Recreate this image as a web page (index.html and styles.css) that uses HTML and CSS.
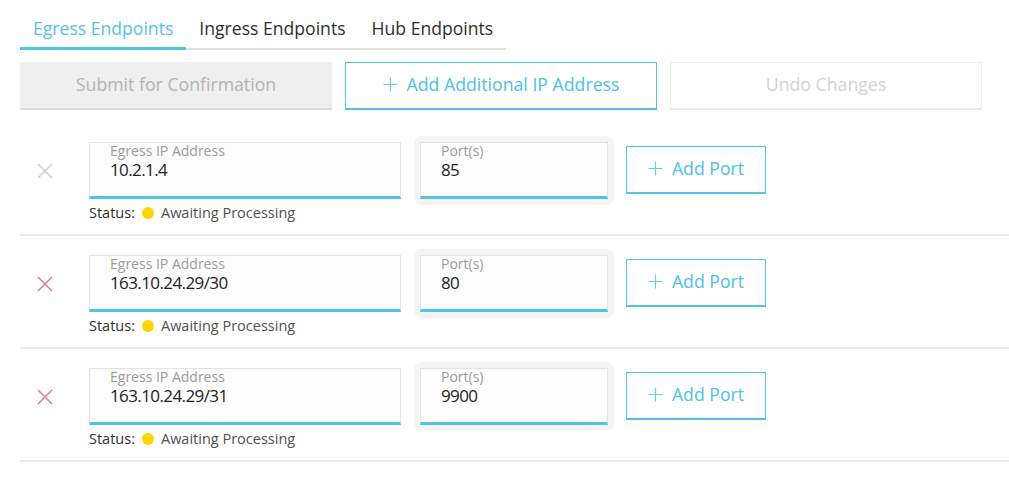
FILE: index.html
```html
<!DOCTYPE html>
<html lang="en">
<head>
<meta charset="utf-8">
<title>Endpoints</title>
<link rel="stylesheet" href="styles.css">
</head>
<body>
<div class="page">
  <nav class="tabs">
    <div class="tab active">Egress Endpoints</div>
    <div class="tab">Ingress Endpoints</div>
    <div class="tab">Hub Endpoints</div>
  </nav>

  <div class="actions">
    <button class="btn btn-disabled">Submit for Confirmation</button>
    <button class="btn btn-primary"><svg class="plus" viewBox="0 0 16 16"><path d="M8 0.5V15.5M0.5 8H15.5"/></svg>Add Additional IP Address</button>
    <button class="btn btn-ghost">Undo Changes</button>
  </div>

  <div class="rows">
    <div class="row">
      <div class="remove"><svg class="x muted" viewBox="0 0 16 16"><path d="M1 1L15 15M15 1L1 15"/></svg></div>
      <div class="ip-col">
        <div class="field ip"><span class="label">Egress IP Address</span><span class="value">10.2.1.4</span></div>
        <div class="status"><span class="status-key">Status:</span><span class="dot"></span><span class="status-val">Awaiting Processing</span></div>
      </div>
      <div class="port-wrap"><div class="field port"><span class="label">Port(s)</span><span class="value">85</span></div></div>
      <button class="btn btn-primary add-port"><svg class="plus" viewBox="0 0 16 16"><path d="M8 0.5V15.5M0.5 8H15.5"/></svg>Add Port</button>
    </div>

    <div class="row">
      <div class="remove"><svg class="x danger" viewBox="0 0 16 16"><path d="M1 1L15 15M15 1L1 15"/></svg></div>
      <div class="ip-col">
        <div class="field ip"><span class="label">Egress IP Address</span><span class="value">163.10.24.29/30</span></div>
        <div class="status"><span class="status-key">Status:</span><span class="dot"></span><span class="status-val">Awaiting Processing</span></div>
      </div>
      <div class="port-wrap"><div class="field port"><span class="label">Port(s)</span><span class="value">80</span></div></div>
      <button class="btn btn-primary add-port"><svg class="plus" viewBox="0 0 16 16"><path d="M8 0.5V15.5M0.5 8H15.5"/></svg>Add Port</button>
    </div>

    <div class="row">
      <div class="remove"><svg class="x danger" viewBox="0 0 16 16"><path d="M1 1L15 15M15 1L1 15"/></svg></div>
      <div class="ip-col">
        <div class="field ip"><span class="label">Egress IP Address</span><span class="value">163.10.24.29/31</span></div>
        <div class="status"><span class="status-key">Status:</span><span class="dot"></span><span class="status-val">Awaiting Processing</span></div>
      </div>
      <div class="port-wrap"><div class="field port"><span class="label">Port(s)</span><span class="value">9900</span></div></div>
      <button class="btn btn-primary add-port"><svg class="plus" viewBox="0 0 16 16"><path d="M8 0.5V15.5M0.5 8H15.5"/></svg>Add Port</button>
    </div>
  </div>
</div>
</body>
</html>
```

FILE: styles.css
```css
* { box-sizing: border-box; }

html, body {
  margin: 0;
  padding: 0;
  background: #ffffff;
}

body {
  font-family: "Open Sans", "Noto Sans", sans-serif;
  color: #2e2e2e;
}

.page {
  padding-left: 20px;
}

/* Tabs */
.tabs {
  display: inline-flex;
  border-bottom: 2px solid #e1e1e1;
}

.tab {
  padding: 16px 13px 7px;
  font-size: 17.6px;
  line-height: 24px;
  color: #2e2e2e;
  border-bottom: 3px solid transparent;
  margin-bottom: -2px;
}

.tab.active {
  color: #56c1e5;
  border-bottom-color: #4fc4e6;
}

/* Buttons */
.actions {
  display: grid;
  grid-template-columns: repeat(3, 312px);
  column-gap: 13px;
  margin-top: 12px;
}

.btn {
  display: flex;
  align-items: center;
  justify-content: center;
  height: 48px;
  padding: 0 0 3px;
  margin: 0;
  font-family: inherit;
  font-size: 17.7px;
  background: #ffffff;
  border: 1px solid transparent;
  border-bottom-width: 2px;
  cursor: pointer;
}

.btn-disabled {
  background: #efefef;
  border-color: #efefef;
  border-bottom-color: #dcdcdc;
  color: #b3b3b3;
}

.btn-primary {
  border-color: #4fc4e6;
  color: #4fbfe3;
}

.btn-ghost {
  border-color: #efefef;
  border-bottom-color: #e8e8e8;
  color: #d2d2d2;
}

.plus {
  width: 15px;
  height: 15px;
  margin-right: 9px;
  fill: none;
  stroke: #6cc9e8;
  stroke-width: 1.3;
}

/* Rows */
.rows {
  margin-top: 13px;
}

.row {
  display: flex;
  align-items: flex-start;
  padding: 13px 0 12px;
  border-bottom: 2px solid #ececec;
}

.remove {
  width: 69px;
  height: 69px;
  display: flex;
  align-items: center;
  padding-left: 17px;
  padding-top: 1px;
}

.x {
  width: 16px;
  height: 16px;
  fill: none;
  stroke-width: 1.5;
}

.x.muted { stroke: #cdcdcd; }
.x.danger { stroke: #e07d8c; }

.ip-col {
  width: 312px;
  padding-top: 6px;
  margin-right: 13px;
}

.field {
  display: flex;
  flex-direction: column;
  height: 57px;
  padding: 0 0 0 20px;
  background: #fcfcfc;
  border: 1px solid #e3e3e3;
  border-bottom: 3px solid #4fc4e6;
}

.label {
  display: block;
  font-size: 14px;
  line-height: 16px;
  color: #9a9a9a;
}

.value {
  display: block;
  margin-top: 1px;
  font-size: 17px;
  line-height: 19px;
  letter-spacing: -0.6px;
  color: #222222;
}

.status {
  display: flex;
  align-items: center;
  margin-top: 3px;
  height: 20px;
  font-size: 14.5px;
}

.status-key { color: #2e2e2e; }

.dot {
  width: 12px;
  height: 12px;
  border-radius: 50%;
  background: #ffd400;
  margin: 1px 7px 0 7px;
}

.status-val { color: #505050; }

.port-wrap {
  width: 200px;
  padding: 6px;
  background: #f4f4f4;
  border-radius: 8px;
  margin-right: 12px;
}

.field.port {
  width: 188px;
}

.add-port {
  width: 140px;
  margin-top: 10px;
}
```
